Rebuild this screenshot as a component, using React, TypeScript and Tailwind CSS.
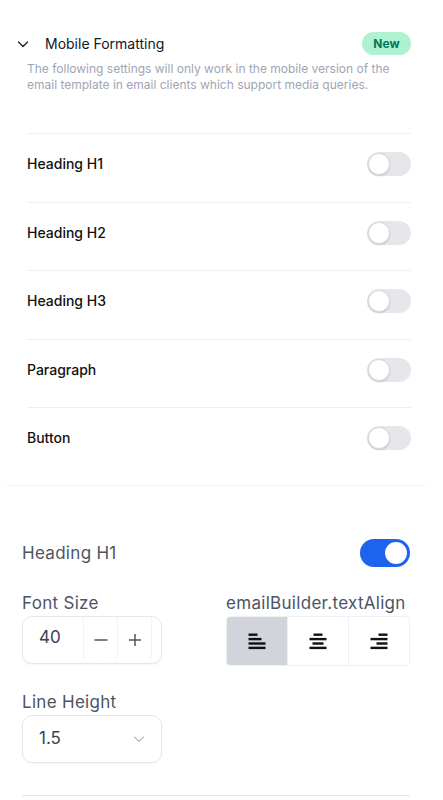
import React from "react";

function Toggle({ on }: { on?: boolean }) {
  if (on) {
    return (
      <div className="flex h-[28px] w-[50px] items-center justify-end rounded-full bg-[#1d63ed] pr-[3px]">
        <div className="h-[22px] w-[22px] rounded-full bg-white" />
      </div>
    );
  }
  return (
    <div className="flex h-[24px] w-[44px] items-center rounded-full bg-[#e5e7eb] pl-[1px]">
      <div className="h-[22px] w-[22px] rounded-full border border-[#d9dbe0] bg-white shadow-[0_1px_2px_rgba(0,0,0,0.15)]" />
    </div>
  );
}

function AlignIcon({ kind }: { kind: "left" | "center" | "right" }) {
  const widths = kind === "left" ? [9, 13, 17, 17] : [9, 17, 11, 17];
  return (
    <svg width="18" height="18" viewBox="0 0 18 18">
      {widths.map((w, i) => {
        const x = kind === "left" ? 0.5 : kind === "center" ? 9 - w / 2 : 17.5 - w;
        return <rect key={i} x={x} y={1.5 + i * 4.4} width={w} height={2.4} fill="#111" />;
      })}
    </svg>
  );
}

const label = "text-[17px] tracking-[0.3px] leading-[24px] text-[#4b5563]";

export default function App() {
  const rows = ["Heading H1", "Heading H2", "Heading H3", "Paragraph", "Button"];
  return (
    <div className="min-h-[800px] w-[443px] bg-white font-['Inter',sans-serif]">
      <div className="ml-[5px] mr-[16px] border-b border-[#f3f4f6] pb-[9.5px] pl-[22px] pr-[16px] pt-[32px]">
        <div className="-ml-[10px] flex h-[23px] items-center">
          <svg width="12" height="12" viewBox="0 0 12 12" fill="none">
            <path d="M1.5 4l4.5 4.5L10.5 4" stroke="#222" strokeWidth="1.3" strokeLinecap="round" strokeLinejoin="round" />
          </svg>
          <span className="ml-[16px] text-[14px] text-[#111827]">Mobile Formatting</span>
          <span className="ml-auto flex h-[23px] w-[49px] items-center justify-center rounded-full bg-[#aef2d2] text-[12px] font-bold text-[#047857]">
            New
          </span>
        </div>
        <p className="mt-[6px] text-[12px] leading-[16px] text-[#a0a5b4]">
          The following settings will only work in the mobile version of the
          <br />
          email template in email clients which support media queries.
        </p>
        <div className="mt-[40px]">
          {rows.map((r) => (
            <div key={r} className="flex h-[68.5px] items-start justify-between border-t border-[#efeff2] pt-[18px]">
              <span className="text-[14px] font-medium leading-[24px] text-[#111]">{r}</span>
              <Toggle />
            </div>
          ))}
        </div>
      </div>

      <div className="pl-[22px] pr-[33px] pt-[53px]">
        <div className="flex h-[28px] items-center justify-between">
          <span className={label}>Heading H1</span>
          <Toggle on />
        </div>

        <div className="mt-[24px] flex justify-between">
          <div className="w-[140px]">
            <div className={label}>Font Size</div>
            <div className="mt-[1px] flex h-[48px] items-center rounded-[10px] border border-[#e5e7eb] pr-[9px] shadow-[0_1px_2px_rgba(0,0,0,0.05)]">
              <span className="mb-[5px] w-[60px] pl-[16px] text-[17px] text-[#374151]">40</span>
              <div className="flex h-full flex-1 items-stretch">
                <button className="flex flex-1 items-center justify-center rounded-b-[8px] border-x border-[#f3f4f6] text-[#555]">
                  <svg width="16" height="16" viewBox="0 0 16 16">
                    <path d="M1.5 8h13" stroke="#555" strokeWidth="1.5" />
                  </svg>
                </button>
                <button className="flex flex-1 items-center justify-center rounded-b-[8px] border-r border-[#f3f4f6] text-[#555]">
                  <svg width="16" height="16" viewBox="0 0 16 16">
                    <path d="M2 8h12M8 2v12" stroke="#555" strokeWidth="1.5" />
                  </svg>
                </button>
              </div>
            </div>
          </div>
          <div className="w-[184px]">
            <div className={label}>emailBuilder.textAlign</div>
            <div className="mt-[1px] flex h-[50px] overflow-hidden rounded-[4px] border border-[#eef0f3]">
              <div className="flex flex-1 items-center justify-center bg-[#d1d5db]">
                <AlignIcon kind="left" />
              </div>
              <div className="flex flex-1 items-center justify-center border-l border-[#eef0f3]">
                <AlignIcon kind="center" />
              </div>
              <div className="flex flex-1 items-center justify-center border-l border-[#eef0f3]">
                <AlignIcon kind="right" />
              </div>
            </div>
          </div>
        </div>

        <div className="mt-[24px] w-[140px]">
          <div className={label}>Line Height</div>
          <div className="mt-[1px] flex h-[48px] items-center justify-between rounded-[10px] border border-[#e5e7eb] pl-[16px] pr-[16px] shadow-[0_1px_2px_rgba(0,0,0,0.05)]">
            <span className="text-[17px] text-[#374151]">1.5</span>
            <svg width="12" height="12" viewBox="0 0 12 12" fill="none">
              <path d="M1.5 4l4.5 4.5L10.5 4" stroke="#b6bac2" strokeWidth="1.1" strokeLinecap="round" strokeLinejoin="round" />
            </svg>
          </div>
        </div>

        <div className="mt-[32px] border-t border-[#e5e7eb]" />
      </div>
    </div>
  );
}
